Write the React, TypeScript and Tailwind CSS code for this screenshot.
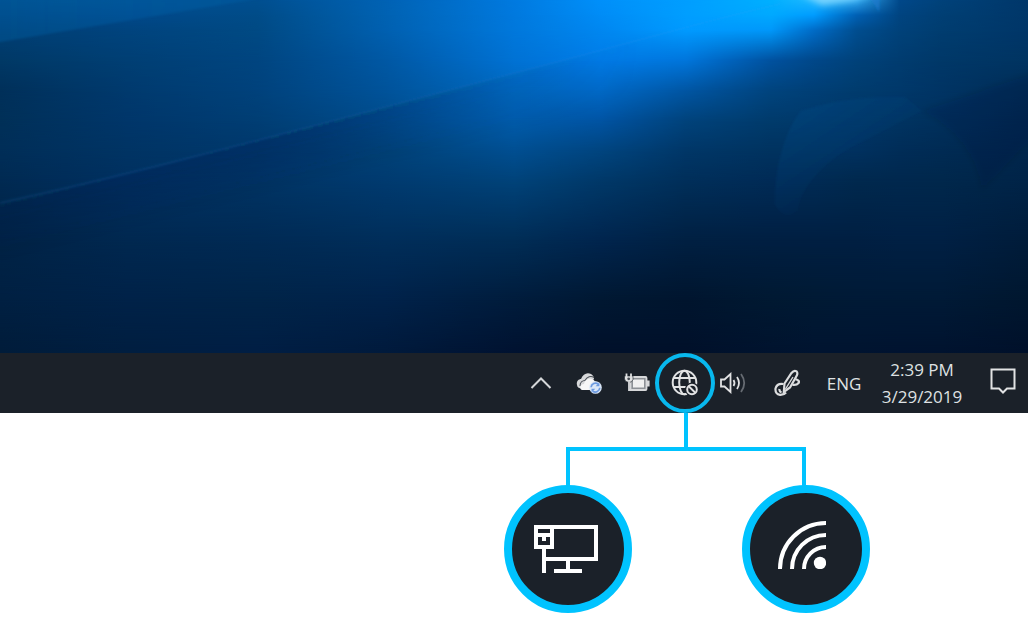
import React from 'react';

const COLUMNS = [0, 128, 257, 385, 514, 600, 686, 771, 814, 857, 900, 942, 1028];

// Colour rows of the wallpaper, from top to bottom; each fades into the next.
const ROWS: { y: number; colors: string }[] = [
  { y: 0, colors: '004a86 004f90 004f90 0062b4 007ae0 0090fa 009eff 00b0ff 20b8ff 30a8f0 00488a 00427a 00376a' },
  { y: 15, colors: '00447e 00488a 004c88 0062b2 0079de 008cf6 009eff 00a9ff 009cff 0060b4 004480 003f74 003769' },
  { y: 30, colors: '003e74 00447e 004a84 0060b0 0078dc 0087f0 009aff 0098fa 006cc8 004e90 00427a 003d70 003668' },
  { y: 60, colors: '003966 003f74 004580 0058a4 0072d4 007ce8 0076dc 0052a0 00488a 00427a 003c70 003868 003462' },
  { y: 90, colors: '00305a 003a6e 00427c 00539a 0069c0 006ac8 0056a4 00447e 003f76 003c6e 00386a 003464 002c55' },
  { y: 120, colors: '003058 00366a 003e74 004c8c 005cac 0054a4 00437c 003b6c 00396a 003666 003462 00305c 002850' },
  { y: 150, colors: '002e58 003464 00386c 004278 004f92 004580 003768 003360 003360 003160 002d58 002b54 00264c' },
  { y: 180, colors: '002a52 003060 003464 003b70 00437a 003969 002f5a 002b56 002b54 00294e 00284e 00284c 002448' },
  { y: 240, colors: '002346 002850 002a54 002e5a 002d56 00254e 002042 001f42 001f42 001f42 002044 002044 001c3a' },
  { y: 300, colors: '002042 002248 002448 00224a 001c3c 001832 00152e 001932 001a34 001a36 001a36 001a36 00172f' },
  { y: 353, colors: '001c3a 001e40 001e44 001a3c 001230 00102a 00102a 00132e 001430 001430 001330 00132f 00102a' },
];

function Wallpaper() {
  return (
    <svg
      className="block h-[353px] w-full"
      viewBox="0 0 1028 353"
      preserveAspectRatio="none"
      aria-hidden="true"
    >
      <defs>
        {ROWS.map((row, i) => (
          <React.Fragment key={row.y}>
            <linearGradient id={`row${i}`} gradientUnits="userSpaceOnUse" x1="0" x2="1028" y1="0" y2="0">
              {row.colors.split(' ').map((c, j) => (
                <stop key={j} offset={COLUMNS[j] / 1028} stopColor={`#${c}`} />
              ))}
            </linearGradient>
            {i > 0 && (
              <>
                <linearGradient
                  id={`fade${i}`}
                  gradientUnits="userSpaceOnUse"
                  x1="0"
                  x2="0"
                  y1={ROWS[i - 1].y}
                  y2={row.y}
                >
                  <stop offset="0" stopColor="#fff" stopOpacity="0" />
                  <stop offset="1" stopColor="#fff" />
                </linearGradient>
                <mask id={`mask${i}`} maskUnits="userSpaceOnUse" x="0" y="0" width="1028" height="353">
                  <rect width="1028" height="353" fill={`url(#fade${i})`} />
                </mask>
              </>
            )}
          </React.Fragment>
        ))}
        <filter id="soft" x="-20%" y="-50%" width="140%" height="200%">
          <feGaussianBlur stdDeviation="1" />
        </filter>
        <filter id="glow" x="-50%" y="-100%" width="200%" height="300%">
          <feGaussianBlur stdDeviation="3" />
        </filter>
        <linearGradient id="wedge" gradientUnits="userSpaceOnUse" x1="0" y1="0" x2="260" y2="0">
          <stop offset="0" stopColor="#0070bb" stopOpacity=".28" />
          <stop offset="1" stopColor="#0070bb" stopOpacity=".2" />
        </linearGradient>
        <linearGradient id="shade" gradientUnits="userSpaceOnUse" x1="250" y1="140" x2="264" y2="196">
          <stop offset="0" stopColor="#001c3c" stopOpacity=".18" />
          <stop offset="1" stopColor="#001c3c" stopOpacity="0" />
        </linearGradient>
        <linearGradient id="across" gradientUnits="userSpaceOnUse" x1="0" y1="0" x2="640" y2="0">
          <stop offset="0" stopColor="#fff" stopOpacity=".5" />
          <stop offset=".5" stopColor="#fff" />
          <stop offset="1" stopColor="#fff" stopOpacity="0" />
        </linearGradient>
        <mask id="acrossMask" maskUnits="userSpaceOnUse" x="0" y="0" width="1028" height="353">
          <rect width="640" height="353" fill="url(#across)" />
        </mask>
        <linearGradient id="petal" gradientUnits="userSpaceOnUse" x1="790" y1="110" x2="850" y2="200">
          <stop offset="0" stopColor="#0a4c8c" stopOpacity=".3" />
          <stop offset="1" stopColor="#0a4c8c" stopOpacity="0" />
        </linearGradient>
      </defs>
      {ROWS.map((row, i) => (
        <rect
          key={row.y}
          width="1028"
          height="353"
          fill={`url(#row${i})`}
          mask={i > 0 ? `url(#mask${i})` : undefined}
        />
      ))}
      <path d="M-20 -20H360L250 0L0 42L-20 45Z" fill="url(#wedge)" filter="url(#soft)" />
      <g mask="url(#acrossMask)">
        <path d="M-10 206L160 165Q340 118 514 73L640 40V120L-10 290Z" fill="url(#shade)" filter="url(#soft)" />
      </g>
      <path d="M0 203C160 168 340 118 514 73S700 22 780 4" fill="none" stroke="#3399ee" strokeOpacity=".14" strokeWidth="2" filter="url(#soft)" />
      <path d="M775 205C774 170 785 130 801 111C840 98 880 96 905 97L922 111L850 148C820 165 800 190 798 210Q785 222 775 205Z" fill="url(#petal)" filter="url(#soft)" />
      <path d="M922 111L1040 71V130L982 190C978 160 960 130 922 111Z" fill="#00122c" fillOpacity=".12" filter="url(#glow)" />
      <path d="M800 -6H872L850 1L822 5Z" fill="#8fdcff" fillOpacity=".8" filter="url(#glow)" />
      <path d="M870 -2L880 -2L879 12Z" fill="#1a7ad0" fillOpacity=".6" filter="url(#soft)" />
    </svg>
  );
}

function ChevronIcon() {
  return (
    <svg className="h-3 w-[22px]" viewBox="0 0 22 12" fill="none" stroke="#d5d7d9" strokeWidth="2" aria-hidden="true">
      <path d="M1.5 11L11 1.5L20.5 11" />
    </svg>
  );
}

function CloudIcon() {
  return (
    <svg className="h-6 w-7" viewBox="0 0 28 24" aria-hidden="true">
      <path d="M2 14C1 10 4 8 6 8C8 3 12 1 16 3C18 4 19 6 19 8L9 18L4 17Q2 16 2 14Z" fill="#d7d8da" />
      <path d="M5 15C5 11.5 7.5 9.5 10 9.5C12 5.5 16 4.5 19 6.5" fill="none" stroke="#4a4f56" strokeWidth="1.1" />
      <path d="M7 19C4 18 5 13 9 13C10 7.5 17 6 20 10.5C24 10.5 25 15 23 19Z" fill="#f7f7f7" />
      <circle cx="20.5" cy="16.5" r="6.3" fill="#dbe7f7" />
      <path d="M16.1 16.2A4.4 4.4 0 0 1 23.2 13M24.8 16.8A4.4 4.4 0 0 1 17.8 20.2" fill="none" stroke="#6c9ae0" strokeWidth="1.7" />
      <path d="M24.4 11.4V15.2H20.6ZM16.5 21.6V17.8H20.3Z" fill="#6c9ae0" />
    </svg>
  );
}

function BatteryIcon() {
  return (
    <svg className="h-5 w-[26px]" viewBox="0 0 26 20" aria-hidden="true">
      <rect x="6.5" y="4" width="16" height="13" rx="1" fill="#8d9196" stroke="#d7d8da" strokeWidth="1.8" />
      <rect x="9" y="6.5" width="11" height="8" fill="#f0f0f0" />
      <rect x="23" y="7.5" width="2.6" height="6" fill="#d7d8da" />
      <path d="M.5 3H9V6.5Q8 9.5 5 9.5Q1 9 .5 6Z" fill="#dfe0e1" stroke="#1b2129" strokeWidth=".6" />
      <path d="M2.5 .5V4M7 .5V4" stroke="#dfe0e1" strokeWidth="1.8" />
      <path d="M5 9V17H8" fill="none" stroke="#d7d8da" strokeWidth="1.8" />
      <circle cx="4.7" cy="5.8" r="1.4" fill="#454a51" />
    </svg>
  );
}

function GlobeIcon() {
  return (
    <svg className="size-7" viewBox="0 0 28 28" fill="none" stroke="#e2e3e4" strokeWidth="2" aria-hidden="true">
      <circle cx="13.5" cy="13.5" r="11.8" />
      <ellipse cx="13.5" cy="13.5" rx="5.3" ry="11.8" />
      <path d="M3 9H24M3 18H24" />
      <circle cx="21" cy="20.5" r="7" fill="#1b2129" stroke="none" />
      <circle cx="21" cy="20.5" r="4.8" />
      <path d="M17.5 17L24.5 24" />
    </svg>
  );
}

function VolumeIcon() {
  return (
    <svg className="h-[22px] w-[26px]" viewBox="0 0 26 22" fill="none" stroke="#e2e3e4" strokeWidth="1.8" aria-hidden="true">
      <path d="M1 7.5H4.5L10.5 2V20L4.5 14.5H1Z" />
      <path d="M13.5 8Q15.5 11 13.5 14" />
      <path d="M17 5Q21 11 17 17" />
      <path d="M21 2Q27.5 11 21 20" stroke="#666b72" />
    </svg>
  );
}

function PenIcon() {
  return (
    <svg className="h-7 w-[26px]" viewBox="0 0 26 28" fill="none" stroke="#dcddde" strokeWidth="2.2" aria-hidden="true">
      <path d="M9.8 23L10.5 14.5L17.5 4Q20 .8 22.6 2.4Q24 4 22.8 6.6L16 18.5Z" />
      <path d="M11.5 20L19 8" strokeWidth="1.4" />
      <path d="M9.5 15Q3 14 1.5 19.5Q1 25 6 25.8Q10 26 12 23.5M5.5 20Q5 22.5 7.5 23.5" />
      <path d="M21.5 10.2Q26 11.5 24.6 14Q22.5 16.5 18.5 15.8" />
    </svg>
  );
}

function MessageIcon() {
  return (
    <svg className="size-[26px]" viewBox="0 0 26 26" fill="none" stroke="#e2e3e4" strokeWidth="2" aria-hidden="true">
      <path d="M1.5 1.5H24.5V20.5H17L13 24.5L9 20.5H1.5Z" />
    </svg>
  );
}

function EthernetIcon() {
  return (
    <svg className="h-12 w-16" viewBox="0 0 64 48" fill="none" stroke="#fff" strokeWidth="4" aria-hidden="true">
      <path d="M2 2H18V22H2ZM2 10H18M10 11V16M10 22V48" />
      <path d="M18 2H62V34H12M34 34V46M20 46H48" />
    </svg>
  );
}

function WifiIcon() {
  return (
    <svg className="size-12" viewBox="0 0 48 48" fill="none" stroke="#fff" strokeWidth="4" aria-hidden="true">
      <path d="M2 48A46 46 0 0 1 48 2M14 48A34 34 0 0 1 48 14M26 48A22 22 0 0 1 48 26" />
      <circle cx="42" cy="42" r="6.2" fill="#fff" stroke="none" />
    </svg>
  );
}

function TrayButton({ label, children }: { label: string; children: React.ReactNode }) {
  return (
    <button type="button" aria-label={label} className="relative flex h-full w-12 items-center justify-center">
      {children}
    </button>
  );
}

export default function App() {
  return (
    <main className="min-h-screen bg-white font-['Open_Sans','Noto_Sans',sans-serif]">
      <Wallpaper />
      <div className="flex h-[60px] items-center justify-end bg-[#1b2129] text-[17px] leading-[27px] font-medium text-[#dfe1e3]">
        <TrayButton label="Show hidden icons"><ChevronIcon /></TrayButton>
        <TrayButton label="OneDrive"><CloudIcon /></TrayButton>
        <TrayButton label="Battery"><BatteryIcon /></TrayButton>
        <TrayButton label="Network">
          <GlobeIcon />
          <span className="absolute -inset-x-[6px] inset-y-0 rounded-full border-4 border-[#08b8ee]" />
        </TrayButton>
        <TrayButton label="Volume"><VolumeIcon /></TrayButton>
        <button type="button" aria-label="Windows Ink" className="flex h-full w-[60px] items-center justify-center">
          <PenIcon />
        </button>
        <button type="button" className="h-full w-[54px] text-center">ENG</button>
        <button type="button" className="flex h-full w-[102px] flex-col items-center justify-center">
          <span>2:39 PM</span>
          <span>3/29/2019</span>
        </button>
        <button type="button" aria-label="Notifications" className="flex h-full w-[55px] items-center justify-center pb-1 pl-1">
          <MessageIcon />
        </button>
      </div>
      <section aria-label="Network icons" className="flex justify-end pr-[158px]">
        <div className="flex w-[366px] flex-col">
          <div className="ml-[180px] h-[34px] w-1 bg-[#00c3ff]" />
          <div className="ml-[62px] h-[39px] w-[240px] border-x-4 border-t-4 border-[#00c3ff]" />
          <div className="-mt-px flex justify-between">
            <div role="img" aria-label="Ethernet" className="flex size-32 items-center justify-center rounded-full border-8 border-[#00c3ff] bg-[#1b2129] pr-1">
              <EthernetIcon />
            </div>
            <div role="img" aria-label="Wi-Fi" className="flex size-32 items-center justify-center rounded-full border-8 border-[#00c3ff] bg-[#1b2129] pr-2 pb-2">
              <WifiIcon />
            </div>
          </div>
        </div>
      </section>
    </main>
  );
}
